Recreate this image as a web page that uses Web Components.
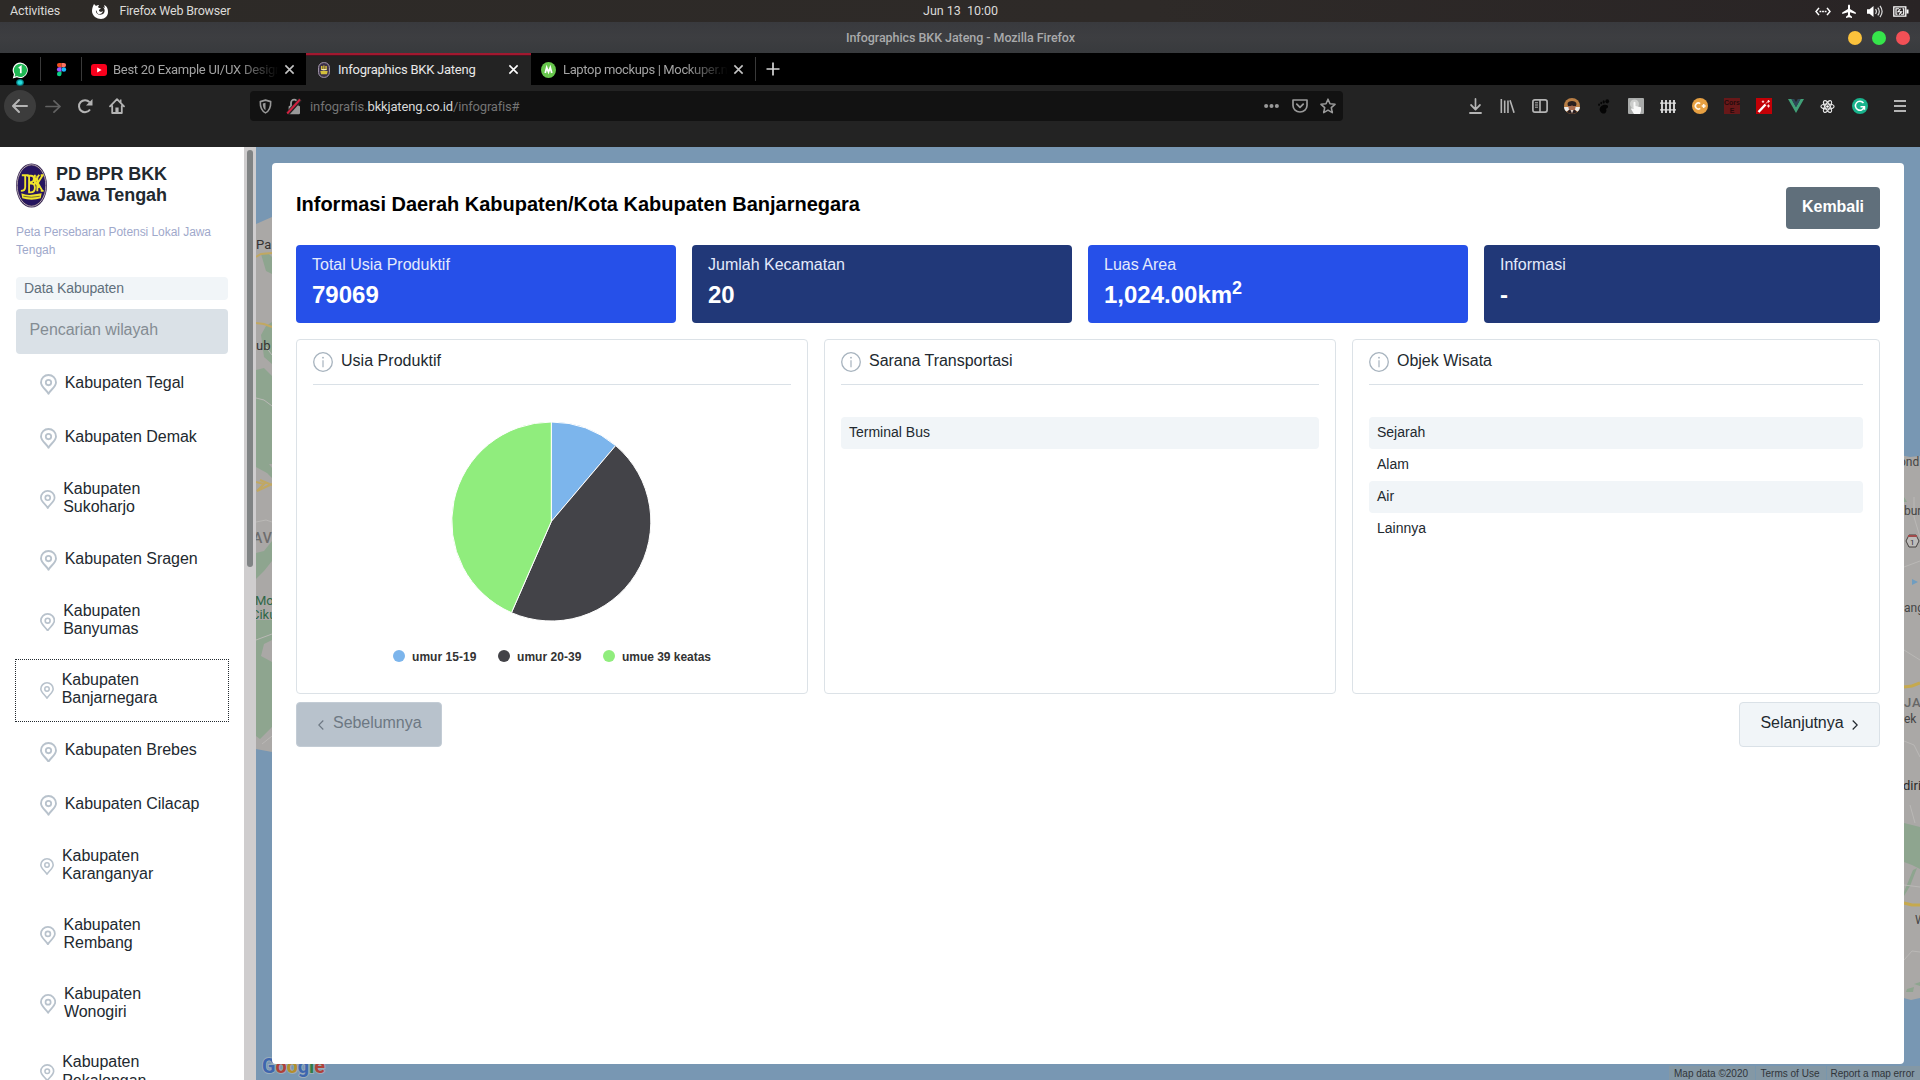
<!DOCTYPE html>
<html lang="id">
<head>
<meta charset="utf-8">
<title>Infographics BKK Jateng</title>
<style>
html,body{margin:0;height:100%;overflow:hidden;background:#232323}
body{font-family:"Liberation Sans",Arial,sans-serif;color:#22292f}
</style>
</head>
<body>
<desktop-screen></desktop-screen>
<script>
const define=(name,html,init)=>{
  const t=document.createElement('template');t.innerHTML=html;
  customElements.define(name,class extends HTMLElement{
    connectedCallback(){
      if(this.shadowRoot)return;
      const r=this.attachShadow({mode:'open'});
      r.appendChild(t.content.cloneNode(true));
      if(init)init.call(this,r);
    }
  });
};

/* Single line of text tracked to an exact width */
define('fit-text',`<style>:host{display:inline-block;white-space:pre;flex:none}span{display:inline-block}</style><span><slot></slot></span>`,function(r){
  const w=+this.getAttribute('w'),s=r.querySelector('span');
  if(w){
    const n=this.textContent.length,nat=s.getBoundingClientRect().width;
    if(nat)s.style.letterSpacing=((w-nat)/n).toFixed(3)+'px';
  }
});

const stroke='fill="none" stroke="currentColor"';
const ICONS={
  firefox:['0 0 16 16','<path fill="#fff" d="M2 1l2 2c1-1 2-1 3-1L6 4l1 1h2l-2 2v1l2 1 2-1-1 2c-2 2-5 1-5-1l-1-2c-1 5 6 6 8 3 1-2 1-4-1-6l2 1-1-3c3 1 4 4 4 7 0 4-3 7-7 7S0 13 0 8c0-3 1-5 2-7z"/>'],
  whatsapp:['0 0 18 18','<path fill="#fff" d="M9 .5A8.2 8.2 0 1 1 5.2 16.2L.8 17.4 2 13.2A8.3 8.3 0 0 1 9 .5z"/><path fill="#1fb954" d="M9 1.8A7 7 0 1 1 5.3 14.8L2.7 15.6 3.4 13A7 7 0 0 1 9 1.8z"/><path d="M7.2 6.5L9.3 5v7" fill="none" stroke="#fff" stroke-width="1.8"/>'],
  figma:['0 0 12 18','<path fill="#f24e1e" d="M3.5 1H6v5H3.5a2.5 2.5 0 0 1 0-5z"/><path fill="#ff7262" d="M6 1h2.5a2.5 2.5 0 0 1 0 5H6z"/><path fill="#a259ff" d="M3.5 6H6v5H3.5a2.5 2.5 0 0 1 0-5z"/><circle fill="#1abcfe" cx="8.6" cy="8.5" r="2.5"/><path fill="#0acf83" d="M3.5 11H6v2.5A2.5 2.5 0 1 1 3.5 11z"/>'],
  youtube:['0 0 16 12','<rect width="16" height="12" rx="3" fill="#f8001c"/><path fill="#fff" d="M6.2 3.4v5.2l4.4-2.6z"/>'],
  bkk:['0 0 32 46','<ellipse cx="16" cy="23" rx="16" ry="22.6" fill="#3a2a55"/><ellipse cx="16" cy="23" rx="14.8" ry="21.2" fill="none" stroke="#c3b4bd" stroke-width=".9"/><ellipse cx="16" cy="23" rx="14" ry="20.2" fill="#26155f"/><g fill="none" stroke="#efe32c" stroke-width="1.900"><path d="M6 12.500h7M9.500 12.500v12q0 4-4.500 4M13.500 13v17h1.500q4.500 0 4.500-4.700t-4.500-4.300h-1.500M11.500 13h4q3 0 3 3.200t-3 3.300h-2M19.500 12v10M24 12l-4.500 6.500 4 7M22 13v16M27.500 12.500l-5 8 5 8.500M25.500 12.500h3M25.500 28.500h3"/></g><path fill="#efe32c" d="M5.500 31q5 2 10.500 1.500t10.500-1.500l-1 5q-9.500 3-19 0z"/><path d="M7.500 34q8.500 2 17 0" stroke="#756a35" fill="none"/>'],
  bkksmall:['0 0 12 16','<rect x=".6" y=".6" width="10.800" height="14.800" rx="5" fill="#3b3048" stroke="#a99db2" stroke-width="1"/><path fill="#d4bf3c" d="M3 4h1.500v4H3zM5.200 3.500h1.300v5H5.200zM7.300 4h1.500v4H7.300zM2.300 9h7.400l-.7 3.200H3z"/><path fill="#f2e9b8" d="M3.500 7h5v1.200h-5z"/>'],
  close:['0 0 12 12',`<path ${stroke} stroke-width="1.7" d="M1.500 1.500l9 9M10.500 1.500l-9 9"/>`],
  plus:['0 0 14 14',`<path ${stroke} stroke-width="1.7" d="M7 .5v13M.5 7h13"/>`],
  mock:['0 0 16 16','<circle cx="8" cy="8" r="8" fill="#67c64c"/><path d="M4.500 11l1.600-5.500L8 10l1.900-4.500L11.500 11" fill="none" stroke="#fff" stroke-width="1.900"/>'],
  back:['0 0 32 32',`<circle cx="16" cy="16" r="16" fill="#3c3c3c"/><path ${stroke} stroke-width="2" stroke-linecap="round" stroke-linejoin="round" d="M23 16H9.500M15 10l-6 6 6 6"/>`],
  forward:['0 0 16 16',`<path ${stroke} stroke-width="1.800" stroke-linecap="round" stroke-linejoin="round" d="M1 8h13.500M9 2l6 6-6 6"/>`],
  reload:['0 0 16 16',`<path ${stroke} stroke-width="2" d="M13 11.500A6 6 0 1 1 12.500 4.200"/><path fill="currentColor" d="M15.500 1v6.500H9z"/>`],
  home:['0 0 16 16',`<path ${stroke} stroke-width="1.800" stroke-linejoin="round" stroke-linecap="round" d="M1 8.300L8 1.200l7 7.100M3.200 8v7h9.600V8"/><path ${stroke} stroke-width="1.600" d="M11.700 1.500v3"/><path fill="currentColor" d="M6.400 9.500h3.200V15H6.400z"/>`],
  shield:['0 0 14 16',`<path ${stroke} stroke-width="1.700" stroke-linejoin="round" d="M7 1.200L12.600 2.800C12.800 8 11.600 12.500 7 14.800 2.400 12.500 1.200 8 1.400 2.800z"/><path fill="currentColor" d="M7 4v8C4.600 10.300 4 7.500 4.100 4.800z"/>`],
  lock:['0 0 16 16',`<path ${stroke} stroke-width="1.800" d="M5 8V4.700a3.200 3.200 0 0 1 6.400 0V8"/><rect x="2.600" y="7.200" width="11.400" height="8" rx="1.200" fill="currentColor"/><path d="M1.500 14.800L14.500 1.200" stroke="#232323" stroke-width="4"/><path d="M1.200 14.500L14 1.500" stroke="#d0213f" stroke-width="2"/>`],
  dots:['0 0 14 4','<g fill="currentColor"><circle cx="2" cy="2" r="1.900"/><circle cx="7" cy="2" r="1.900"/><circle cx="12" cy="2" r="1.900"/></g>'],
  pocket:['0 0 16 14',`<path ${stroke} stroke-width="1.700" stroke-linejoin="round" d="M1 1h14v5.500a7 6.500 0 0 1-14 0z"/><path ${stroke} stroke-width="1.800" stroke-linecap="round" stroke-linejoin="round" d="M4.800 5.200L8 8.300l3.200-3.100"/>`],
  star:['0 0 16 16',`<path ${stroke} stroke-width="1.600" stroke-linejoin="round" d="M8 1.200l2 4.600 5 .5-3.700 3.300 1 5L8 12.100l-4.300 2.500 1-5L1 6.300l5-.5z"/>`],
  download:['0 0 14 16',`<path ${stroke} stroke-width="1.800" stroke-linecap="round" stroke-linejoin="round" d="M7 1v10.500M2.200 7L7 11.700 11.800 7M1 15h12"/>`],
  library:['0 0 16 14',`<path ${stroke} stroke-width="1.700" d="M1.400 0v14M5 1.500V14M8.500 1.500V14M10.700 1.200L15 13.800"/>`],
  sidebar:['0 0 16 14',`<rect x=".9" y=".9" width="14.200" height="12.200" rx="2" ${stroke} stroke-width="1.700"/><path ${stroke} stroke-width="1.600" d="M8 1v12"/><path ${stroke} stroke-width="1" d="M3 3.800h3M3 6h3M3 8.200h3"/>`],
  face:['0 0 16 16','<circle cx="8" cy="8" r="8" fill="#b87e45"/><path fill="#a96d50" d="M4 5h8v6l-2 3H6l-2-3z"/><path fill="#2a2020" d="M3.500 6C3.500 2 12.500 2 12.500 6l-.5 2h-3L8 7.300 7 8H4z"/><path fill="#eee" d="M.1 9h4.300l.6 3-2.700 1.600C.8 12.400.1 10.700.1 9zM15.900 9h-4.300l-.6 3 2.700 1.600c1.500-1.200 2.200-2.900 2.200-4.600z"/><path fill="#271d20" d="M5 12h6l2 2c-2.500 2.400-7.500 2.400-10 0z"/><path fill="#e7d6ca" d="M6.500 12h3L8 15.500z"/>'],
  gnome:['0 0 14 16','<g fill="#050505"><ellipse cx="11" cy="2.500" rx="2" ry="2.300"/><ellipse cx="7.200" cy="3.100" rx="1.200" ry="1.700"/><ellipse cx="4.500" cy="4.300" rx="1" ry="1.400"/><ellipse cx="2.200" cy="6" rx="1" ry="1.300"/><path d="M11.500 7c1 1 0 3-2 3.500 1 1 1 3-.5 4.500-2 1.500-5 0-6-3-1-4 5-7.500 8.500-5z"/></g>'],
  hand:['0 0 16 16','<rect width="16" height="16" rx="1" fill="#a9abaa"/><circle cx="6.500" cy="6" r="4.500" fill="#cdcecd"/><path fill="#f8f8f8" d="M5.500 4.500q1-1.500 2 0V8l5.500 1.300V13l-1 3H6L3 11q.5-1.500 2.500 0z"/>'],
  fence:['0 0 16 16','<path fill="none" stroke="#e1e1e1" stroke-width="1.800" d="M2 1v14M6 1v14M10 1v14M14 1v14"/><path stroke="#e1e1e1" stroke-width="1.300" d="M0 4.500h16M0 11.500h16"/>'],
  cplus:['0 0 16 16','<circle cx="8" cy="8" r="8" fill="#e7a042"/><path d="M8.200 5.600A3 3 0 1 0 8.200 10.400M9.700 8h4M11.700 6v4" fill="none" stroke="#fff6e8" stroke-width="1.600"/>'],
  cors:['0 0 16 16','<rect width="16" height="16" fill="#681819"/><g fill="#250b0c" font-family="Liberation Sans" font-size="7" font-weight="700" text-anchor="middle"><text x="8" y="7">Cors</text><text x="8" y="14.500">E</text></g>'],
  wand:['0 0 16 16','<rect width="16" height="16" fill="#c30006"/><path d="M2.500 14L9.500 6.500" stroke="#fff" stroke-width="2.500"/><path d="M10 5.500L11.500 4M7 2.500v2.400M5.800 3.700h2.400M12.500 6.500v3M11 8h3M12.500 2v2.600M11.200 3.300h2.800" stroke="#ffdede" stroke-width="1"/>'],
  vue:['0 0 18 16','<path fill="#41a078" d="M0 0h4L9 9l5-9h4L9 16z"/><path fill="#2f4658" d="M3.800 0H7l2 3.600L11 0h3.200L9 9.500z"/>'],
  react:['0 0 16 16','<g fill="none" stroke="#e9e9e9" stroke-width="1.200"><ellipse cx="8" cy="8" rx="7" ry="2.700"/><ellipse cx="8" cy="8" rx="7" ry="2.700" transform="rotate(60 8 8)"/><ellipse cx="8" cy="8" rx="7" ry="2.700" transform="rotate(120 8 8)"/></g><circle cx="8" cy="8" r="1.400" fill="#fff"/>'],
  grammarly:['0 0 16 16','<circle cx="8" cy="8" r="8" fill="#19b38c"/><path d="M11.500 5A4.500 4.500 0 1 0 12.300 8.800H8.500M12.500 8.700v3" fill="none" stroke="#fff" stroke-width="1.500"/>'],
  menu:['0 0 12 12',`<path ${stroke} stroke-width="1.800" d="M0 1h12M0 6h12M0 11h12"/>`],
  net:['0 0 16 10',`<path ${stroke} stroke-width="1.500" d="M4 1L1 5l3 4M12 1l3 4-3 4"/><path ${stroke} stroke-width="1.600" d="M4.500 5h7" stroke-dasharray="1.800 .8"/>`],
  plane:['0 0 14 14','<path fill="#fff" d="M6 1.500Q7-.5 8 1.500V5l5.800 3.500V10L8 8.300V11l2 1.700V14l-3-.7-3 .7v-1.300L6 11V8.300L.2 10V8.500L6 5z"/>'],
  volume:['0 0 16 14',`<path fill="#fff" d="M0 4.500h2.500L6.500 1v12l-4-3.500H0z"/><path d="M8.500 4.500q1.800 2.500 0 5M10.800 2.800q3 4.200 0 8.400M13 1q4.200 6 0 12" fill="none" stroke="#ddd" stroke-width="1.200"/>`],
  battery:['0 0 16 12','<path fill="none" stroke="#fff" stroke-width="1.300" d="M.8 1h12v10H.8z"/><path fill="#fff" d="M13.500 3.800H15.500v4.400h-2z"/><path fill="none" stroke="#fff" stroke-width="1.200" d="M6 3H3v6h1.500M8 9h2.700V3H9.500M7.500 3L5 6.300h3.500L6 9.500"/>'],
  pin:['0 0 17 21',`<path ${stroke} stroke-width="1.900" stroke-linejoin="round" d="M8.500 19.800C6.500 16 1 12.800 1 8.500a7.500 7.500 0 0 1 15 0C16 12.800 10.500 16 8.500 19.800z"/><circle cx="8.500" cy="8.600" r="2.700" ${stroke} stroke-width="1.800"/>`],
  info:['0 0 20 20',`<circle cx="10" cy="10" r="9.300" ${stroke} stroke-width="1.300"/><path ${stroke} stroke-width="1.200" d="M10 8.300v7"/><circle cx="10" cy="5.700" r=".9" fill="currentColor"/>`],
  left:['0 0 6 10',`<path ${stroke} stroke-width="1.100" d="M5.300.5L.8 5l4.500 4.500"/>`],
  right:['0 0 6 10',`<path ${stroke} stroke-width="1.200" d="M.7.5L5.200 5 .7 9.500"/>`]
};
define('ui-icon',`<style>:host{display:inline-flex;flex:none;align-items:center;justify-content:center}svg{display:block}</style>`,function(r){
  const [vb,body]=ICONS[this.getAttribute('name')],w=this.getAttribute('w'),h=this.getAttribute('h')||w;
  r.innerHTML+=`<svg viewBox="${vb}" width="${w}" height="${h}" preserveAspectRatio="none">${body}</svg>`;
});

define('system-bar',`<style>
:host{display:grid;grid-template-columns:923px 1fr auto;height:22px;background:linear-gradient(90deg,#2d2a27,#2e2a28 60%,#292425);font:12.500px/22px Roboto,sans-serif;color:#dcdad8}
.l{display:flex;padding-left:10px;align-items:center}
.l ui-icon{margin:0 12px 0 31.500px}
.r{display:flex;align-items:center;padding-right:11px;color:#fff}.r ui-icon{width:26px}.r ui-icon:last-child{width:16px;margin-left:5px}
</style><div class="l"><fit-text w="50">Activities</fit-text><ui-icon name="firefox" w="16" h="16"></ui-icon><fit-text w="111">Firefox Web Browser</fit-text></div>
<div><fit-text w="75">Jun 13  10:00</fit-text></div>
<div class="r"><ui-icon name="net" w="16" h="9"></ui-icon><ui-icon name="plane" w="14" h="14"></ui-icon><ui-icon name="volume" w="16" h="13"></ui-icon><ui-icon name="battery" w="16" h="11"></ui-icon></div>`);

define('window-title',`<style>
:host{display:grid;grid-template-columns:1fr auto 1fr;height:31px;align-items:center;background:linear-gradient(#393a3e,#3d3e41 50%,#383a3d);font:500 12.500px/31px Roboto,sans-serif;color:#a9aaab}
.b{display:flex;gap:10px;justify-content:flex-end;padding-right:10px}i{width:14px;height:14px;border-radius:50%;background:#fbc23c}i:nth-child(2){background:#36e54b}i:nth-child(3){background:#f25056}
fit-text{padding-left:1px}
</style><span></span><fit-text w="229">Infographics BKK Jateng - Mozilla Firefox</fit-text><div class="b"><i></i><i></i><i></i></div>`);

define('browser-tab',`<style>
:host{display:flex;box-sizing:border-box;height:32px;align-items:center;font:13px/32px Roboto,sans-serif;color:#a3a3a3;padding-top:1px}
:host([active]){background:#232323;color:#e8e8e8;border-top:2px solid #a2182f;box-shadow:inset 0 1px #4a1420}
.t{overflow:hidden;flex:1;display:flex;height:31px;align-items:center}
:host([active]) ui-icon,:host([active]) .t,:host([active]) ::slotted(ui-icon){margin-top:-2px}
:host([fade]) .t{-webkit-mask-image:linear-gradient(90deg,#000 72%,transparent 97%);mask-image:linear-gradient(90deg,#000 72%,transparent 97%)}
ui-icon.x{color:#c4c4c4}:host([active]) ui-icon.x{color:#fff}
</style><slot name="icon"></slot><div class="t"><slot></slot></div><ui-icon class="x" name="close" w="11" h="11"></ui-icon>`);

define('tab-strip',`<style>
:host{display:flex;height:32px;background:#000}
.pin{width:40px;border-right:1px solid #393939;margin:4px 0;display:flex;align-items:center;justify-content:center;position:relative}
.pin ui-icon{margin-top:2px}
.pin i{position:absolute;left:16px;bottom:-5px;width:8px;height:7px;border-radius:50%;background:radial-gradient(#25dede 30%,#057b7e 60%,transparent)}
.s{width:1px;background:#393939;margin:4px 0}
browser-tab [slot]{width:16px}
.a{width:224px;padding:1px 11.500px 0 9px}
.b{width:225px;padding:1px 12px 0 10px}
.c{width:224px;padding:1px 11px 0 9.500px}
ui-icon[slot]{margin-right:6px}
.p{margin:0 0 0 9.500px;color:#d5d5d5}
</style>
<div class="pin"><ui-icon name="whatsapp" w="17" h="17"></ui-icon><i></i></div>
<div class="pin"><ui-icon name="figma" w="11" h="16"></ui-icon></div>
<browser-tab class="a" fade><ui-icon slot="icon" name="youtube" w="16" h="12"></ui-icon><fit-text w="169">Best 20 Example UI/UX Design</fit-text></browser-tab>
<browser-tab class="b" active><ui-icon slot="icon" name="bkksmall" w="12" h="16"></ui-icon><fit-text w="137.500">Infographics BKK Jateng</fit-text></browser-tab>
<browser-tab class="c" fade><ui-icon slot="icon" name="mock" w="15" h="16"></ui-icon><fit-text w="175" style="padding-left:.5px">Laptop mockups | Mockuper.net</fit-text></browser-tab>
<div class="s"></div><ui-icon class="p" name="plus" w="14" h="14"></ui-icon>`);

define('nav-bar',`<style>
:host{display:flex;height:62px;background:#232323;color:#b4b4b4;font:13px/30px Roboto,sans-serif}
.n{display:flex;align-items:center;height:42px;width:250px;padding-left:4px;box-sizing:border-box;flex:none}
.u{display:flex;align-items:center;box-sizing:border-box;flex:none;width:1092.500px;height:30px;margin-top:6px;background:#121212;border-radius:4px;padding-left:8px;color:#999}
.u .h{color:#747474}.u b{font-weight:400;color:#d8d8d8}
.u fit-text{margin-top:1px}
.u .sp{flex:1}
.u .e{width:28px}.u .e:last-child{margin-right:1px}
.x{margin-left:117px;display:flex;flex:none;height:42px}.x ui-icon{width:32px}
</style>
<div class="n"><ui-icon name="back" w="32" h="32"></ui-icon><ui-icon name="forward" w="16" h="15" style="width:34px;color:#626262"></ui-icon><ui-icon name="reload" w="16" h="16" style="width:30px"></ui-icon><ui-icon name="home" w="16" h="16" style="width:34px"></ui-icon></div>
<div class="u"><ui-icon name="shield" w="13" h="15" style="width:14px"></ui-icon><ui-icon name="lock" w="16" h="17" style="width:16px;margin:0 8.500px 0 13.500px"></ui-icon><span style="display:flex"><fit-text class="h" w="57">infografis.</fit-text><fit-text w="85.500"><b>bkkjateng.co.id</b></fit-text><fit-text class="h" w="66">/infografis#</fit-text></span><span class="sp"></span><ui-icon class="e" name="dots" w="15" h="4"></ui-icon><ui-icon class="e" name="pocket" w="16" h="14"></ui-icon><ui-icon class="e" name="star" w="16" h="16"></ui-icon></div>
<div class="x"><ui-icon name="download" w="13" h="16"></ui-icon><ui-icon name="library" w="15" h="14"></ui-icon><ui-icon name="sidebar" w="16" h="14"></ui-icon><ui-icon name="face" w="16" h="16"></ui-icon><ui-icon name="gnome" w="13" h="15"></ui-icon><ui-icon name="hand" w="16" h="16"></ui-icon><ui-icon name="fence" w="16" h="15"></ui-icon><ui-icon name="cplus" w="16" h="16"></ui-icon><ui-icon name="cors" w="16" h="16"></ui-icon><ui-icon name="wand" w="16" h="16"></ui-icon><ui-icon name="vue" w="16" h="14"></ui-icon><ui-icon name="react" w="15" h="15"></ui-icon><ui-icon name="grammarly" w="16" h="16"></ui-icon><ui-icon name="menu" w="12" h="12" style="width:49px"></ui-icon></div>`);

define('region-item',`<style>
:host{display:flex;align-items:center;height:53.600px;padding:0 16px;flex:none;box-sizing:border-box}
:host([tall]){height:68.800px}
.box{display:flex;align-items:center;width:212px;box-sizing:border-box;padding-left:24px}
:host([active]) .box{height:61px;outline:1px dotted #22292f;margin-top:3px}
:host([active]) .t{margin-top:-3px}
ui-icon{color:#b8c2cc;margin-top:3px}
:host([active]) ui-icon{margin-top:0}
.t{font-size:16px;line-height:18.300px;white-space:pre-line;letter-spacing:-.03px}
</style><div class="box"></div>`,function(r){
  const s=+this.getAttribute('s')||17;
  r.querySelector('.box').innerHTML=`<ui-icon name="pin" w="${s}" h="${(s*1.23).toFixed(1)}"></ui-icon><div class="t" style="margin-left:${(this.getAttribute('g')||8.5)-.8}px"><slot></slot></div>`;
});

define('region-sidebar',`<style>
:host{display:flex;width:256px;height:933px;flex:none;background:#fff;overflow:hidden}
.c{width:244px;display:flex;flex-direction:column;flex:none}
.c>*{flex:none}
.h{display:flex;padding:15.500px 16px 0;gap:9px}
h1{margin:1px 0 0;font-size:18px;line-height:21.400px;font-weight:700}
h1 fit-text{display:block}
p{margin:0;padding:0 16px;font-size:12px;line-height:18px;color:#9fa9cb}p fit-text{display:block}
.d{margin:18px 16px 0;height:23.500px;background:#f1f5f8;border-radius:4px;padding-left:8px;font-size:14px;line-height:22px;color:#606f7b}
.s{margin:8.500px 16px 3px;height:45px;background:#dae1e7;border-radius:4px;padding-left:13.500px;font-size:16px;line-height:42px;color:#848c93}
.bar{width:12px;background:#cfcdce;display:flex;justify-content:center;padding-top:3px;box-sizing:border-box}
.bar i{width:6px;height:417px;border-radius:3px;background:#808384}
</style>
<div class="c"><div class="h"><ui-icon name="bkk" w="31" h="45"></ui-icon><h1><fit-text w="111">PD BPR BKK</fit-text><fit-text w="111">Jawa Tengah</fit-text></h1></div>
<p style="margin-top:15px"><fit-text w="195">Peta Persebaran Potensi Lokal Jawa</fit-text><fit-text w="39.500">Tengah</fit-text></p>
<div class="d"><fit-text w="100">Data Kabupaten</fit-text></div><div class="s"><fit-text w="128.500">Pencarian wilayah</fit-text></div>
<region-item>Kabupaten Tegal</region-item><region-item>Kabupaten Demak</region-item>
<region-item tall s="15.500">Kabupaten
Sukoharjo</region-item><region-item>Kabupaten Sragen</region-item>
<region-item tall s="15.300" g="8.700">Kabupaten
Banyumas</region-item><region-item tall active s="14" g="8.500">Kabupaten
Banjarnegara</region-item><region-item>Kabupaten Brebes</region-item><region-item>Kabupaten Cilacap</region-item>
<region-item tall s="14" g="8.700">Kabupaten
Karanganyar</region-item><region-item tall s="15.800">Kabupaten
Rembang</region-item><region-item tall s="16.200">Kabupaten
Wonogiri</region-item><region-item tall s="14.500">Kabupaten
Pekalongan</region-item></div>
<div class="bar"><i></i></div>`);

define('stat-card',`<style>
:host{display:block;box-sizing:border-box;width:380px;height:78px;border-radius:4px;background:#2650e9;color:#e4eafc;padding:8px 16px}
:host([dark]){background:#213878}
:host([wide]){width:396px}
.l{font-size:16px;line-height:24px;white-space:nowrap}
.n{font-size:24px;line-height:36px;font-weight:700;color:#fff;white-space:nowrap}
::slotted(sup){font-size:18px;line-height:0;position:relative;vertical-align:baseline;top:-9.500px}
</style><div class="l"><slot name="label"></slot></div><div class="n"><slot></slot></div>`);

define('info-panel',`<style>
:host{display:block;box-sizing:border-box;width:512px;height:355px;border:1px solid #dce2e7;border-radius:4px;padding:8px 16px 0}
:host([wide]){width:528px}
.h{display:flex;align-items:flex-start;height:37px;border-bottom:1px solid #dae1e7;font-size:16px;line-height:24px;box-sizing:border-box}
.h ui-icon{color:#a7b3be;margin:4px 8px 0 0}
.h ::slotted(*){margin-top:1px}
.b{padding-top:32px}
</style><div class="h"><ui-icon name="info" w="20" h="20"></ui-icon><slot name="title"></slot></div><div class="b"><slot></slot></div>`);

define('list-row',`<style>:host{display:block;height:32px;box-sizing:border-box;padding:5px 8px;font-size:14px;line-height:21px;border-radius:4px}:host([shade]){background:#f1f5f8}</style><slot></slot>`);

define('pie-chart',`<style>
:host{display:flex;flex-direction:column;align-items:center}
svg{display:block;margin:3px 2px 0 0}
.g{display:flex;margin-top:26px;font-size:12px;line-height:18px;font-weight:700;color:#333;gap:21.500px}
.g span{display:flex;align-items:center;gap:7px}.g i{width:12px;height:12px;border-radius:50%;margin-top:-2px}
</style><svg width="202" height="202" viewBox="-101 -101 202 202"></svg><div class="g"><span><i style="background:#7cb5ec"></i><fit-text w="64.500">umur 15-19</fit-text></span><span><i style="background:#434348"></i><fit-text w="64.500">umur 20-39</fit-text></span><span><i style="background:#90ed7d"></i><fit-text w="89">umue 39 keatas</fit-text></span></div>`,function(r){
  const cuts=[0,40.3,203.6,360],col=['#7cb5ec','#434348','#90ed7d'],R=99.5;
  const pt=a=>{a=a*Math.PI/180;return (R*Math.sin(a)).toFixed(2)+' '+(-R*Math.cos(a)).toFixed(2)};
  r.querySelector('svg').innerHTML='<g transform="translate(.3 .5)">'+col.map((c,i)=>`<path d="M0 0L${pt(cuts[i])}A${R} ${R} 0 0 1 ${pt(cuts[i+1])}z" fill="${c}" stroke="#fff" stroke-linejoin="round"/>`).join('')+'</g>';
});

define('nav-button',`<style>
:host{display:flex;align-items:flex-start;box-sizing:border-box;height:45px;border:1px solid #dae1e7;border-radius:4px;background:#f1f5f8;font-size:16px;line-height:24px;padding:8px 21.500px 0 20.500px;color:#22292f}
:host([off]){background:#b8c2cc;border-color:#c3ccd5;color:#6d7883;padding:8px 19px 0 21px}
:host([solid]){background:#606f7b;border:0;height:42px;padding:8px 16px;color:#fff;font-weight:700}
</style><slot></slot>`);

define('detail-modal',`<style>
:host{display:block;box-sizing:border-box;width:1632px;height:901px;background:#fff;border-radius:4px;padding:24px 24px 0}
.r{display:flex;gap:16px}.j{display:flex;justify-content:space-between}
h2{margin:5px 0 0;font-size:20px;line-height:24px;color:#000}
ui-icon{margin-top:9px}
</style>
<div class="j"><h2><fit-text w="564">Informasi Daerah Kabupaten/Kota Kabupaten Banjarnegara</fit-text></h2><nav-button solid><fit-text w="62">Kembali</fit-text></nav-button></div>
<div class="r" style="margin-top:16px">
<stat-card><span slot="label">Total Usia Produktif</span>79069</stat-card>
<stat-card dark><span slot="label">Jumlah Kecamatan</span>20</stat-card>
<stat-card><span slot="label">Luas Area</span>1,024.00km<sup>2</sup></stat-card>
<stat-card dark wide><span slot="label">Informasi</span>-</stat-card></div>
<div class="r" style="margin-top:16px">
<info-panel><fit-text slot="title" w="100">Usia Produktif</fit-text><pie-chart></pie-chart></info-panel>
<info-panel><fit-text slot="title" w="143.500">Sarana Transportasi</fit-text><list-row shade>Terminal Bus</list-row></info-panel>
<info-panel wide><fit-text slot="title" w="95">Objek Wisata</fit-text><list-row shade>Sejarah</list-row><list-row>Alam</list-row><list-row shade>Air</list-row><list-row>Lainnya</list-row></info-panel></div>
<div class="j" style="margin-top:8px"><nav-button off><ui-icon name="left" w="6" h="10" style="margin-right:9px"></ui-icon><fit-text w="88.500">Sebelumnya</fit-text></nav-button><nav-button><fit-text w="83">Selanjutnya</fit-text><ui-icon name="right" w="6" h="10" style="margin-left:8px"></ui-icon></nav-button></div>`);

/* Dimmed map, visible around the modal */
define('map-view',`<style>
:host{display:block;position:relative;width:1664px;height:933px;overflow:hidden}
svg.m{position:absolute;left:0;top:0}
.modal{position:absolute;left:16px;top:16px}
.f{position:absolute;right:0;bottom:0;height:14px;display:flex;background:#8498a5;font-size:10px;line-height:15px;color:#30353a;width:251px}
.f span{display:flex;justify-content:center;border-left:1px solid #7896ad;box-sizing:border-box;padding-right:2px}
</style>
<svg class="m" width="1664" height="933" viewBox="256 147 1664 933" font-family="Roboto,sans-serif" font-size="13">
<rect x="256" y="147" width="1664" height="933" fill="#7897b3"/>
<path fill="#aaa8a6" d="M256 224l16-7v535l-16-3z"/>
<path fill="#8ea58f" d="M261 254l7-1 4 4v17l-6-3zM256 370l8-2 8 8v88h-16zM261 335l5-9 6-4v42l-8-7zM256 460h10l6 8v10l-5-5-11-6zM256 553l8-2 8-10v20l-8 10-8 8zM256 620h16v20l-8 4-3 12 11 6v65l-12 12-4-3z"/>
<path d="M256 398l8 2 8 6M266 347l6 8M256 522l10-2 6 2M262 744l10-8M256 640l16-6" fill="none" stroke="#bab8b6" stroke-width="1"/>
<path d="M256 257l5-3 11-1M256 323l8 1 8 3M256 482l8 2-7 7 15-7M260 480l12 5" fill="none" stroke="#c1a862" stroke-width="2"/>
<text x="256" y="249" fill="#333">Pa</text><text x="256" y="350" fill="#333">ub</text><text x="253" y="543" fill="#6d6d6d" font-weight="500" font-size="14" letter-spacing="1">AV</text>
<text x="255" y="605" fill="#2f6747">Mo</text><text x="251" y="619" fill="#2f6747">Ciku</text>
<path fill="#aaa8a6" d="M1900 455l10 2 10-1v542l-9 2-11-3z"/>
<path fill="#8ea58f" d="M1904 823l16 4v42l-8-4-8-3zM1904 892l9-22 4-2-7 18-6 10zM1907 989l7-2-1 5h-7zM1914 984l6-2v4zM1904 497l3 5h-3z"/>
<path d="M1904 567l16-6M1904 650l16 10M1904 741l10 4 6 12M1910 805l5 18M1904 885l16 2M1904 960l8-9 8 1M1914 497v20l6 20" fill="none" stroke="#bab8b6"/>
<path d="M1904 687l8-1 8-3M1904 903l8 2h8" fill="none" stroke="#c6a94e" stroke-width="3"/>
<g fill="#444" font-size="12"><text x="1899" y="466">ond</text><text x="1904" y="515">bur</text><text x="1904" y="612" >ang</text><text x="1904" y="707" fill="#666" font-weight="500" font-size="13" letter-spacing="1">JA</text><text x="1904" y="723">ek</text><text x="1903" y="790" fill="#2c2c2c" font-size="13">diri</text><text x="1915" y="924">W</text></g>
<path d="M1909 535h7l3 6-3 6h-7l-3-6z" fill="#bdbbb9" stroke="#45413f"/><path d="M1908 536h9" stroke="#a04b4b" stroke-width="2"/><text x="1910" y="545" font-size="8" fill="#333">1</text>
<path d="M1912 579l6 3-6 3z" fill="#6f9dc0"/>
<g font-size="21" font-weight="700" font-family="Roboto,sans-serif" stroke="#9aadbb" stroke-width="2" paint-order="stroke"><text y="1072.500" x="262" textLength="63" lengthAdjust="spacingAndGlyphs"><tspan fill="#3e66ae">G</tspan><tspan fill="#af4139">o</tspan><tspan fill="#b48e2c">o</tspan><tspan fill="#3e66ae">g</tspan><tspan fill="#2f7c49">l</tspan><tspan fill="#af4139">e</tspan></text></g>
</svg>
<detail-modal class="modal"></detail-modal>
<div class="f"><span style="width:86px;border:0"><fit-text w="74">Map data ©2020</fit-text></span><span style="width:71px"><fit-text w="59">Terms of Use</fit-text></span><span style="width:94px"><fit-text w="84">Report a map error</fit-text></span></div>`);

define('desktop-screen',`<style>:host{display:flex;flex-direction:column;width:1920px;height:1080px;overflow:hidden}.c{display:flex}</style>
<system-bar></system-bar><window-title></window-title><tab-strip></tab-strip><nav-bar></nav-bar><div class="c"><region-sidebar></region-sidebar><map-view></map-view></div>`);
</script>
</body>
</html>
